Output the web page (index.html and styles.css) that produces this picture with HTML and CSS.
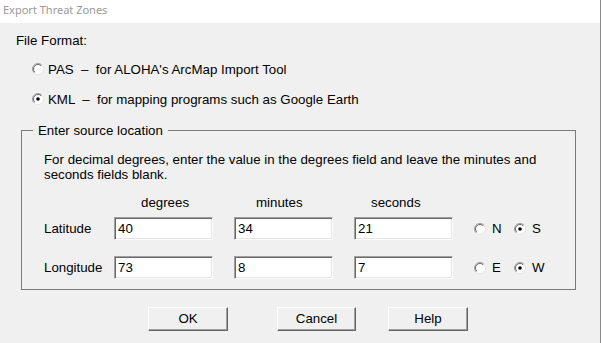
FILE: index.html
```html
<!DOCTYPE html>
<html>
<head>
<meta charset="utf-8">
<link rel="stylesheet" href="styles.css">
</head>
<body>
<div class="window">
  <div class="titlebar">Export Threat Zones</div>
  <div class="content">
    <div class="heading">File Format:</div>
    <div class="format-row first">
      <span class="radio"><svg width="12" height="12" viewBox="0 0 12 12"><circle cx="6" cy="6" r="5.5" fill="#fff" stroke="#e3e3e3" stroke-width="1"/><path d="M2.1 9.9 A5.5 5.5 0 0 1 9.9 2.1" fill="none" stroke="#a0a0a0" stroke-width="1"/><path d="M2.8 9.2 A4.5 4.5 0 0 1 9.2 2.8" fill="none" stroke="#696969" stroke-width="1"/></svg></span>
      <span class="format-label">PAS &nbsp;&ndash; &nbsp;for ALOHA's ArcMap Import Tool</span>
    </div>
    <div class="format-row">
      <span class="radio"><svg width="12" height="12" viewBox="0 0 12 12"><circle cx="6" cy="6" r="5.5" fill="#fff" stroke="#e3e3e3" stroke-width="1"/><path d="M2.1 9.9 A5.5 5.5 0 0 1 9.9 2.1" fill="none" stroke="#a0a0a0" stroke-width="1"/><path d="M2.8 9.2 A4.5 4.5 0 0 1 9.2 2.8" fill="none" stroke="#696969" stroke-width="1"/><circle cx="6" cy="6" r="1.8" fill="#000"/></svg></span>
      <span class="format-label">KML &nbsp;&ndash; &nbsp;for mapping programs such as Google Earth</span>
    </div>

    <fieldset class="group">
      <legend class="group-title">Enter source location</legend>
      <p class="note">For decimal degrees, enter the value in the degrees field and leave the minutes and seconds fields blank.</p>
      <div class="coord-heads">
        <span></span>
        <span class="col-head deg">degrees</span>
        <span class="col-head min">minutes</span>
        <span class="col-head sec">seconds</span>
      </div>
      <div class="coords">
        <span class="row-label">Latitude</span>
        <span class="field">40</span>
        <span class="field">34</span>
        <span class="field">21</span>
        <span class="hemi">
          <span class="radio"><svg width="12" height="12" viewBox="0 0 12 12"><circle cx="6" cy="6" r="5.5" fill="#fff" stroke="#e3e3e3" stroke-width="1"/><path d="M2.1 9.9 A5.5 5.5 0 0 1 9.9 2.1" fill="none" stroke="#a0a0a0" stroke-width="1"/><path d="M2.8 9.2 A4.5 4.5 0 0 1 9.2 2.8" fill="none" stroke="#696969" stroke-width="1"/></svg></span><span class="hemi-label">N</span>
          <span class="radio"><svg width="12" height="12" viewBox="0 0 12 12"><circle cx="6" cy="6" r="5.5" fill="#fff" stroke="#e3e3e3" stroke-width="1"/><path d="M2.1 9.9 A5.5 5.5 0 0 1 9.9 2.1" fill="none" stroke="#a0a0a0" stroke-width="1"/><path d="M2.8 9.2 A4.5 4.5 0 0 1 9.2 2.8" fill="none" stroke="#696969" stroke-width="1"/><circle cx="6" cy="6" r="1.8" fill="#000"/></svg></span><span class="hemi-label">S</span>
        </span>

        <span class="row-label">Longitude</span>
        <span class="field">73</span>
        <span class="field">8</span>
        <span class="field">7</span>
        <span class="hemi">
          <span class="radio"><svg width="12" height="12" viewBox="0 0 12 12"><circle cx="6" cy="6" r="5.5" fill="#fff" stroke="#e3e3e3" stroke-width="1"/><path d="M2.1 9.9 A5.5 5.5 0 0 1 9.9 2.1" fill="none" stroke="#a0a0a0" stroke-width="1"/><path d="M2.8 9.2 A4.5 4.5 0 0 1 9.2 2.8" fill="none" stroke="#696969" stroke-width="1"/></svg></span><span class="hemi-label">E</span>
          <span class="radio"><svg width="12" height="12" viewBox="0 0 12 12"><circle cx="6" cy="6" r="5.5" fill="#fff" stroke="#e3e3e3" stroke-width="1"/><path d="M2.1 9.9 A5.5 5.5 0 0 1 9.9 2.1" fill="none" stroke="#a0a0a0" stroke-width="1"/><path d="M2.8 9.2 A4.5 4.5 0 0 1 9.2 2.8" fill="none" stroke="#696969" stroke-width="1"/><circle cx="6" cy="6" r="1.8" fill="#000"/></svg></span><span class="hemi-label">W</span>
        </span>
      </div>
    </fieldset>

    <div class="buttons">
      <span class="btn btn-ok">OK</span>
      <span class="btn btn-cancel">Cancel</span>
      <span class="btn btn-help">Help</span>
    </div>
  </div>
</div>
</body>
</html>
```
FILE: styles.css
```css
html, body {
  margin: 0;
  padding: 0;
}
body {
  width: 601px;
  height: 343px;
  overflow: hidden;
  background: #f0f0f0;
  font-family: "Liberation Sans", Arial, sans-serif;
  font-size: 13.3px;
  color: #000;
}
.window {
  width: 600px;
  height: 343px;
  border-right: 1px solid #8a8a8a;
  background: #f0f0f0;
}
.titlebar {
  height: 23px;
  background: #fff;
  color: #999;
  font-family: "Noto Sans", "Liberation Sans", sans-serif;
  font-size: 11px;
  line-height: 19px;
  padding-left: 3px;
}
.content {
  padding: 10px 0 0 16px;
}
.heading {
  line-height: 15px;
}
.format-row {
  display: flex;
  align-items: center;
  height: 30px;
  padding-left: 16px;
}
.format-row.first {
  margin-top: 6px;
}
.radio {
  display: inline-flex;
  width: 12px;
  height: 12px;
}
.format-label {
  margin-left: 4px;
}
.group {
  margin: 9px 0 0 5px;
  width: 555px;
  box-sizing: border-box;
  border: 1px solid #7a7a7a;
  padding: 0 0 10px 22px;
}
.group-title {
  margin-left: -11px;
  padding: 0 5px;
  line-height: 15px;
}
.note {
  margin: 14px 0 0 0;
  line-height: 15px;
  width: 510px;
}
.coord-heads,
.coords {
  display: grid;
  grid-template-columns: 49px 99px 99px 99px auto;
  column-gap: 21px;
}
.coord-heads {
  margin-top: 13px;
  line-height: 15px;
}
.coords {
  margin-top: 7px;
  grid-auto-rows: 23px;
  row-gap: 16px;
  align-items: center;
}
.row-label {
  line-height: 15px;
  white-space: nowrap;
}
.col-head.deg { padding-left: 27px; }
.col-head.min { padding-left: 22px; }
.col-head.sec { padding-left: 17px; }
.field {
  box-sizing: border-box;
  height: 23px;
  background: #fff;
  border: 1px solid;
  border-color: #a0a0a0 #fff #fff #a0a0a0;
  box-shadow: inset 1px 1px 0 #696969, inset -1px -1px 0 #e3e3e3;
  padding-left: 3px;
  line-height: 21px;
}
.hemi {
  display: flex;
  align-items: center;
}
.hemi-label {
  margin-left: 6px;
  width: 22px;
}
.buttons {
  display: flex;
  margin-top: 17px;
  padding-left: 132px;
}
.btn {
  box-sizing: border-box;
  width: 80px;
  height: 24px;
  border: 1px solid;
  border-color: #fff #646464 #646464 #fff;
  box-shadow: inset -1px -1px 0 #a0a0a0;
  text-align: center;
  line-height: 21px;
}
.btn-cancel { margin-left: 49px; width: 79px; }
.btn-help { margin-left: 32px; }
```
